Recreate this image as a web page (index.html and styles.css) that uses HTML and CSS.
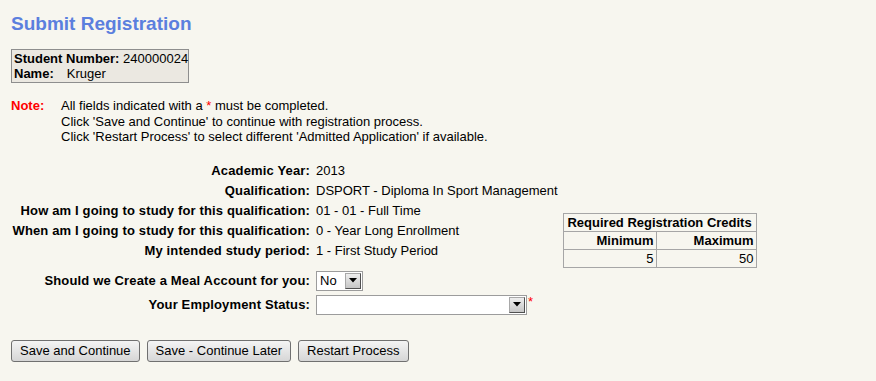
FILE: index.html
```html
<!DOCTYPE html>
<html lang="en">
<head>
    <meta charset="UTF-8">
    <title>Submit Registration</title>
    <link rel="stylesheet" href="styles.css">
</head>
<body>
    <h1>Submit Registration</h1>

    <div class="student">
        <div><b>Student Number:</b> 240000024</div>
        <div><b>Name:</b><span class="student-name">Kruger</span></div>
    </div>

    <div class="note">
        <div class="note-label">Note:</div>
        <div class="note-text">
            <div>All fields indicated with a <span class="req">*</span> must be completed.</div>
            <div>Click 'Save and Continue' to continue with registration process.</div>
            <div>Click 'Restart Process' to select different 'Admitted Application' if available.</div>
        </div>
    </div>

    <div class="form">
        <div class="fields">
            <div class="row"><div class="label">Academic Year:</div><div class="value">2013</div></div>
            <div class="row"><div class="label">Qualification:</div><div class="value">DSPORT - Diploma In Sport Management</div></div>
            <div class="row"><div class="label">How am I going to study for this qualification:</div><div class="value">01 - 01 - Full Time</div></div>
            <div class="row"><div class="label">When am I going to study for this qualification:</div><div class="value">0 - Year Long Enrollment</div></div>
            <div class="row"><div class="label">My intended study period:</div><div class="value">1 - First Study Period</div></div>

            <div class="choices">
                <div class="row choice">
                    <div class="label">Should we Create a Meal Account for you:</div>
                    <div class="value">
                        <span class="select meal">
                            <select>
                                <option>No</option>
                                <option>Yes</option>
                            </select>
                            <span class="arrow"><svg width="8" height="5" viewBox="0 0 8 5"><polygon points="0,0 8,0 4,4.5" fill="#000"/></svg></span>
                        </span>
                    </div>
                </div>
                <div class="row choice">
                    <div class="label">Your Employment Status:</div>
                    <div class="value">
                        <span class="select employment">
                            <select>
                                <option></option>
                            </select>
                            <span class="arrow"><svg width="8" height="5" viewBox="0 0 8 5"><polygon points="0,0 8,0 4,4.5" fill="#000"/></svg></span>
                        </span><span class="req star">*</span>
                    </div>
                </div>
            </div>
        </div>

        <table class="credits">
            <tr><th colspan="2" class="credits-title">Required Registration Credits</th></tr>
            <tr><th class="col-min">Minimum</th><th class="col-max">Maximum</th></tr>
            <tr><td>5</td><td>50</td></tr>
        </table>
    </div>

    <div class="buttons">
        <button>Save and Continue</button>
        <button>Save - Continue Later</button>
        <button>Restart Process</button>
    </div>
</body>
</html>
```

FILE: styles.css
```css
body {
    margin: 0;
    padding: 13px 11px;
    background: #f7f6ef; /* dithered off-white */
    color: #000;
    font-family: "Liberation Sans", Arial, sans-serif;
    font-size: 13px;
}
h1 {
    margin: 0;
    font-size: 19px;
    line-height: 22px;
    color: #5b7fde;
}
.student {
    display: inline-block;
    margin-top: 14px;
    padding: 1px 0 1px 2px;
    border: 1px solid #8e8e8e;
    background: #ebe8e1;
    line-height: 15px;
}
.student-name {
    margin-left: 13px;
}
.note {
    display: flex;
    margin-top: 15px;
    line-height: 15.5px;
}
.note-label {
    width: 50px;
    color: #f00;
    font-weight: bold;
}
.req {
    color: #f00;
}
.form {
    display: flex;
    margin-top: 16px;
}
.row {
    display: flex;
    align-items: center;
    height: 20px;
}
.label {
    width: 299px;
    text-align: right;
    font-weight: bold;
    letter-spacing: 0.15px;
    white-space: nowrap;
}
.value {
    margin-left: 6px;
    white-space: nowrap;
    display: flex;
    align-items: flex-start;
}
.choices {
    margin-top: 8px;
}
.row.choice {
    height: 24px;
}
.select {
    display: inline-flex;
    align-items: center;
    box-sizing: border-box;
    height: 20px;
    padding: 1px;
    border: 1px solid #9c9c9c;
    background: #fff;
}
.select select {
    appearance: none;
    -webkit-appearance: none;
    border: 0;
    background: transparent;
    font-family: inherit;
    font-size: 13px;
    padding: 0 2px;
    margin: 0;
    height: 16px;
    color: #000;
    outline: none;
}
.meal select {
    width: 27px;
}
.employment select {
    width: 191px;
}
.arrow {
    box-sizing: border-box;
    width: 16px;
    height: 16px;
    display: flex;
    align-items: center;
    justify-content: center;
    background: linear-gradient(#eeeeee, #c6c6c6);
    border: 1px solid #505050;
    border-top-color: #a8a8a8;
    border-left-color: #a8a8a8;
}
.star {
    margin-left: 1px;
    line-height: 13px;
}
.credits {
    align-self: center;
    margin: 3px 0 0 5px;
    border-collapse: collapse;
    font-size: 13px;
}
.credits th,
.credits td {
    border: 1px solid #a6a6a6;
    padding: 1px 2px;
    line-height: 15px;
    text-align: right;
    white-space: nowrap;
}
.credits .credits-title {
    text-align: center;
}
.col-min {
    width: 88px;
}
.col-max {
    width: 95px;
}
.buttons {
    display: flex;
    gap: 7px;
    margin-top: 23px;
}
button {
    height: 22px;
    padding: 0 8px;
    border: 1px solid #707070;
    border-radius: 3px;
    background: linear-gradient(#f4f4f4, #d6d6d6);
    font-family: inherit;
    font-size: 13px;
    color: #000;
    cursor: pointer;
}
button:hover {
    background: linear-gradient(#eaf6fd, #bee6fd);
}
```
